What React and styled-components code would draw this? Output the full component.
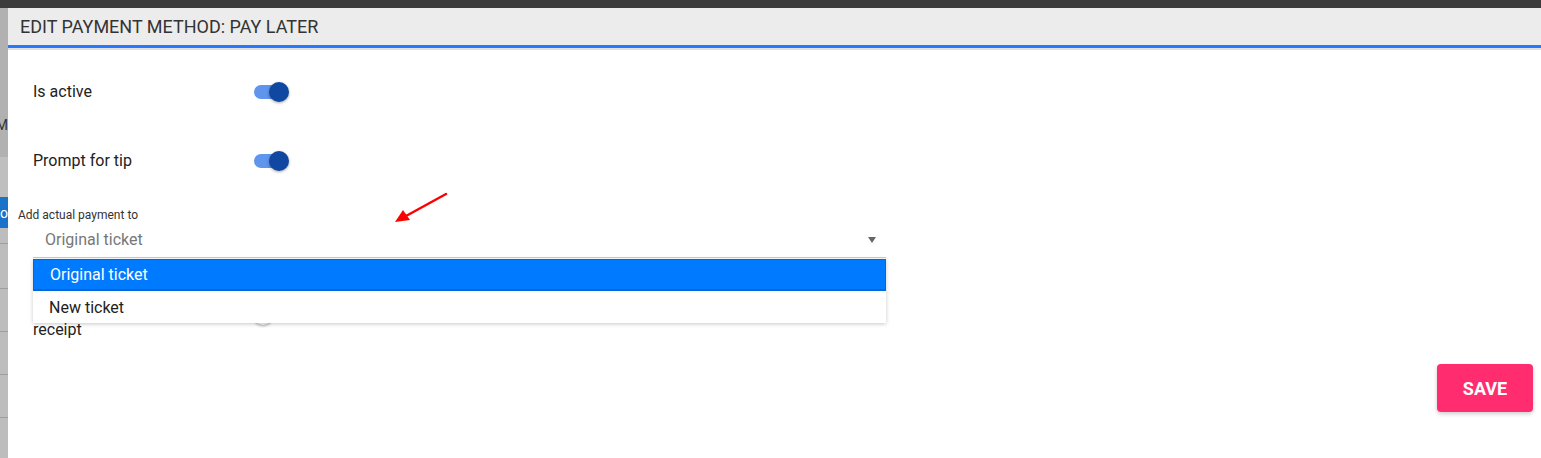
import React from "react";
import styled, { createGlobalStyle } from "styled-components";

const GlobalStyle = createGlobalStyle`
  html, body {
    margin: 0;
    padding: 0;
    background: #ffffff;
    font-family: Roboto, "Liberation Sans", sans-serif;
    overflow: hidden;
  }
`;

const Page = styled.div`
  width: 1541px;
  height: 458px;
  display: flex;
  flex-direction: column;
`;

const TopBar = styled.div`
  height: 8px;
  background: #3c3c3c;
  flex-shrink: 0;
`;

const Main = styled.div`
  flex: 1;
  display: flex;
  min-height: 0;
`;

const Strip = styled.div`
  width: 8px;
  flex-shrink: 0;
  display: flex;
  flex-direction: column;
  overflow: hidden;
  background: #bdbdbd;
`;

const StripCell = styled.div`
  height: ${(p) => p.h}px;
  flex-shrink: 0;
  background: ${(p) => p.bg || "#bdbdbd"};
  border-bottom: ${(p) => (p.line ? "1px solid #9e9e9e" : "none")};
  color: ${(p) => p.fg || "#333"};
  font-size: 14px;
  display: flex;
  align-items: center;
  justify-content: flex-end;
  white-space: nowrap;
  box-sizing: border-box;
`;

const Modal = styled.div`
  flex: 1;
  display: flex;
  flex-direction: column;
  background: #fff;
  position: relative;
`;

const Header = styled.div`
  height: 37px;
  background: #ececec;
  border-bottom: 3px solid #2979ff;
  box-shadow: 0 2px 0 #e0e0e0;
  display: flex;
  align-items: center;
  padding-left: 12px;
  font-size: 18px;
  color: #333;
  text-transform: uppercase;
  flex-shrink: 0;
`;

const Body = styled.div`
  flex: 1;
  display: flex;
  flex-direction: column;
  padding: 26px 8px 0 25px;
  position: relative;
`;

const Row = styled.div`
  display: flex;
  align-items: center;
  height: ${(p) => p.h || 36}px;
  margin-bottom: ${(p) => p.mb || 0}px;
`;

const Label = styled.div`
  width: 221px;
  font-size: 16px;
  color: #222;
  line-height: 20px;
`;

const WrapLabel = styled(Label)`
  width: 140px;
  margin-right: 81px;
`;

const Toggle = styled.div`
  position: relative;
  width: 34px;
  height: 14px;
  border-radius: 7px;
  background: ${(p) => (p.on ? "#5f95ec" : "#d6d6d6")};
  margin-bottom: ${(p) => p.lift || 0}px;
`;

const Thumb = styled.div`
  position: absolute;
  top: -3px;
  left: ${(p) => (p.on ? "15px" : "-1px")};
  width: 20px;
  height: 20px;
  border-radius: 50%;
  background: ${(p) => (p.on ? "#0f47a1" : "#fafafa")};
  box-shadow: 0 1px 3px rgba(0, 0, 0, 0.35);
`;

const Field = styled.div`
  position: relative;
  margin-left: -15px;
  margin-top: 29px;
`;

const FieldLabel = styled.div`
  font-size: 12px;
  color: #333;
  line-height: 14px;
`;

const Select = styled.div`
  margin-left: 15px;
  width: 853px;
  height: 36px;
  border-bottom: 1px solid #c7cbd6;
  display: flex;
  align-items: center;
  justify-content: space-between;
  padding: 0 12px;
  box-sizing: border-box;
  font-size: 16px;
  color: #777;
`;

const Caret = styled.span`
  width: 0;
  height: 0;
  border-left: 4px solid transparent;
  border-right: 4px solid transparent;
  border-top: 6px solid #666;
  margin-right: -2px;
`;

const Menu = styled.div`
  position: absolute;
  left: 15px;
  top: 51px;
  width: 853px;
  background: #fff;
  box-shadow: 0 1px 4px rgba(0, 0, 0, 0.22);
  z-index: 5;
`;

const Option = styled.div`
  height: 32px;
  display: flex;
  align-items: center;
  padding-left: 16px;
  font-size: 16px;
  box-sizing: border-box;
  background: ${(p) => (p.active ? "#007bff" : "#fff")};
  color: ${(p) => (p.active ? "#fff" : "#222")};
  border: ${(p) => (p.active ? "1px solid #0069d9" : "none")};
  border-bottom-width: ${(p) => (p.active ? "2px" : "0")};
`;

const HiddenRow = styled(Row)`
  margin-top: 42px;
`;

const SaveBar = styled.div`
  display: flex;
  justify-content: flex-end;
  margin-top: 24px;
`;

const SaveButton = styled.button`
  width: 96px;
  height: 48px;
  border: none;
  border-radius: 4px;
  background: #ff2d6f;
  color: #fff;
  font-family: Roboto, "Liberation Sans", sans-serif;
  font-weight: 700;
  font-size: 18px;
  box-shadow: 0 2px 4px rgba(0, 0, 0, 0.2);
`;

const Arrow = styled.svg`
  position: absolute;
  left: 378px;
  top: 140px;
`;

export default function App() {
  return (
    <Page>
      <GlobalStyle />
      <TopBar />
      <Main>
        <Strip>
          <StripCell h={149} bg="#b1b1b1">
            <span style={{ marginTop: 85 }}>M</span>
          </StripCell>
          <StripCell h={40} bg="#bfbfbf" />
          <StripCell h={31} bg="#1a73c8" fg="#fff">o</StripCell>
          <StripCell h={16} line />
          <StripCell h={45} line />
          <StripCell h={43} line />
          <StripCell h={43} line />
          <StripCell h={43} line />
          <StripCell h={40} />
        </Strip>
        <Modal>
          <Header>Edit payment method: Pay later</Header>
          <Body>
            <Row h={36} mb={33}>
              <Label>Is active</Label>
              <Toggle on>
                <Thumb on />
              </Toggle>
            </Row>
            <Row h={36}>
              <Label>Prompt for tip</Label>
              <Toggle on>
                <Thumb on />
              </Toggle>
            </Row>
            <Field>
              <FieldLabel>Add actual payment to</FieldLabel>
              <Select>
                <span>Original ticket</span>
                <Caret />
              </Select>
              <Menu>
                <Option active>Original ticket</Option>
                <Option>New ticket</Option>
              </Menu>
            </Field>
            <HiddenRow h={40}>
              <WrapLabel>Print customer receipt</WrapLabel>
              <Toggle lift={11}>
                <Thumb />
              </Toggle>
            </HiddenRow>
            <SaveBar>
              <SaveButton>SAVE</SaveButton>
            </SaveBar>
            <Arrow width="70" height="40" viewBox="0 0 70 40">
              <line x1="60" y1="6" x2="20" y2="28" stroke="#f00" strokeWidth="2.5" strokeLinecap="round" />
              <polygon points="9,34 17,22 24,32" fill="#f00" />
            </Arrow>
          </Body>
        </Modal>
      </Main>
    </Page>
  );
}
